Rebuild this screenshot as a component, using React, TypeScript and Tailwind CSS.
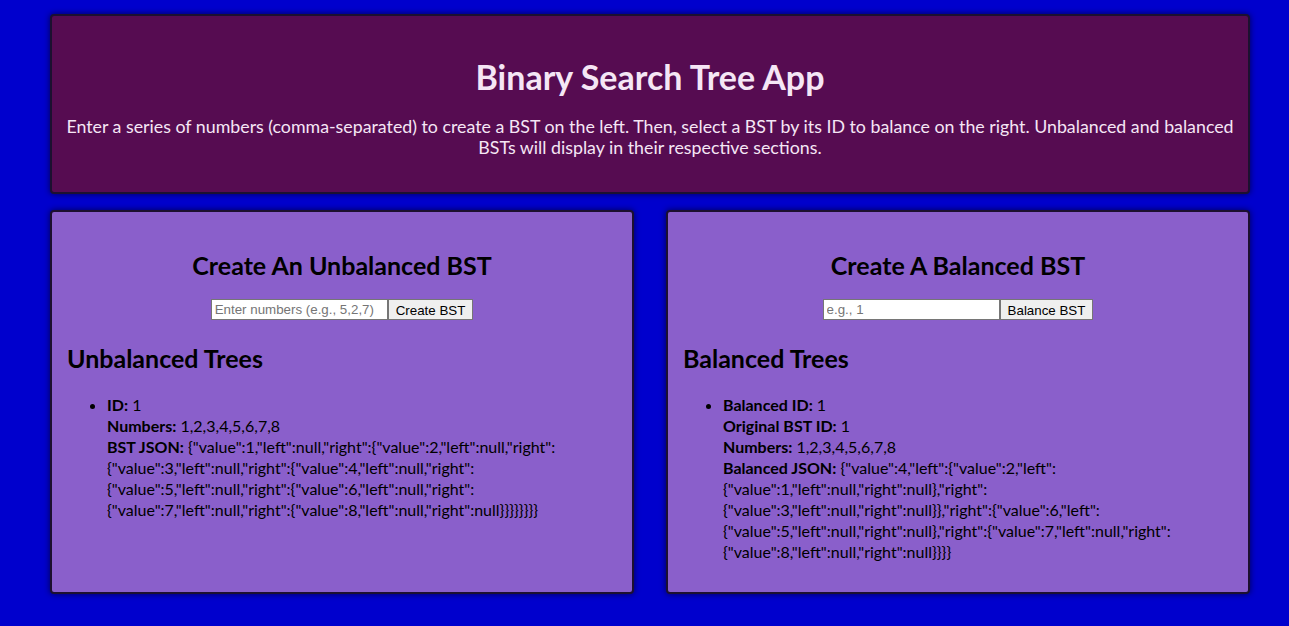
const unbalancedJson =
  '{"value":1,"left":null,"right":{"value":2,"left":null,"right":{"value":3,"left":null,"right":{"value":4,"left":null,"right":{"value":5,"left":null,"right":{"value":6,"left":null,"right":{"value":7,"left":null,"right":{"value":8,"left":null,"right":null}}}}}}}}';

const balancedJson =
  '{"value":4,"left":{"value":2,"left":{"value":1,"left":null,"right":null},"right":{"value":3,"left":null,"right":null}},"right":{"value":6,"left":{"value":5,"left":null,"right":null},"right":{"value":7,"left":null,"right":{"value":8,"left":null,"right":null}}}}';

const panel = "rounded-[4px] border-2 border-[#1c1030] shadow-[0_0_6px_rgba(0,0,0,0.6)]";

function TreeForm({ title, placeholder, button }: { title: string; placeholder: string; button: string }) {
  return (
    <>
      <h2 className="text-center text-[25px] font-bold leading-[30px]">{title}</h2>
      <div className="flex justify-center mt-[19px]">
        <input
          type="text"
          placeholder={placeholder}
          className="w-[177px] h-[21px] bg-white border border-[#767676] px-[3px] text-[13.33px] font-['Liberation_Sans',sans-serif] placeholder:text-[#757575] outline-none"
        />
        <button className="h-[21px] px-[7px] bg-[#efefef] border border-[#767676] text-[13.33px] font-['Liberation_Sans',sans-serif] text-black">
          {button}
        </button>
      </div>
    </>
  );
}

export default function App() {
  return (
    <div className="min-h-screen bg-[#0000cd] pt-[14px] pb-[32px] font-['Lato','Liberation_Sans',sans-serif] text-[16px] leading-[21px]">
      <div className="w-[1200px] ml-[50px]">
        {/* Header */}
        <div className={`${panel} bg-[#560c51] px-[8px] pt-[42px] h-[180px] text-center text-[#f5e6f5]`}>
          <h1 className="text-[34px] font-bold leading-[38px] mb-[20px]">Binary Search Tree App</h1>
          <p className="text-[17.8px] leading-[21px]">
            Enter a series of numbers (comma-separated) to create a BST on the left. Then, select a BST by its ID to balance on the right. Unbalanced and balanced BSTs will display in their respective sections.
          </p>
        </div>

        <div className="grid grid-cols-2 gap-[32px] mt-[16px]">
          {/* Left */}
          <div className={`${panel} bg-[#8a5fcb] h-[384px] px-[15px] pt-[38px]`}>
            <TreeForm title="Create An Unbalanced BST" placeholder="Enter numbers (e.g., 5,2,7)" button="Create BST" />
            <h2 className="text-[25px] font-bold leading-[30px] mt-[23px]">Unbalanced Trees</h2>
            <ul className="list-disc pl-[40px] mt-[21px] leading-[21px] break-words">
              <li>
                <strong>ID:</strong> 1
                <br />
                <strong>Numbers:</strong> 1,2,3,4,5,6,7,8
                <br />
                <strong>BST JSON:</strong> {unbalancedJson}
              </li>
            </ul>
          </div>

          {/* Right */}
          <div className={`${panel} bg-[#8a5fcb] h-[384px] px-[15px] pt-[38px]`}>
            <TreeForm title="Create A Balanced BST" placeholder="e.g., 1" button="Balance BST" />
            <h2 className="text-[25px] font-bold leading-[30px] mt-[23px]">Balanced Trees</h2>
            <ul className="list-disc pl-[40px] mt-[21px] leading-[21px] break-words">
              <li>
                <strong>Balanced ID:</strong> 1
                <br />
                <strong>Original BST ID:</strong> 1
                <br />
                <strong>Numbers:</strong> 1,2,3,4,5,6,7,8
                <br />
                <strong>Balanced JSON:</strong> {balancedJson}
              </li>
            </ul>
          </div>
        </div>
      </div>
    </div>
  );
}
